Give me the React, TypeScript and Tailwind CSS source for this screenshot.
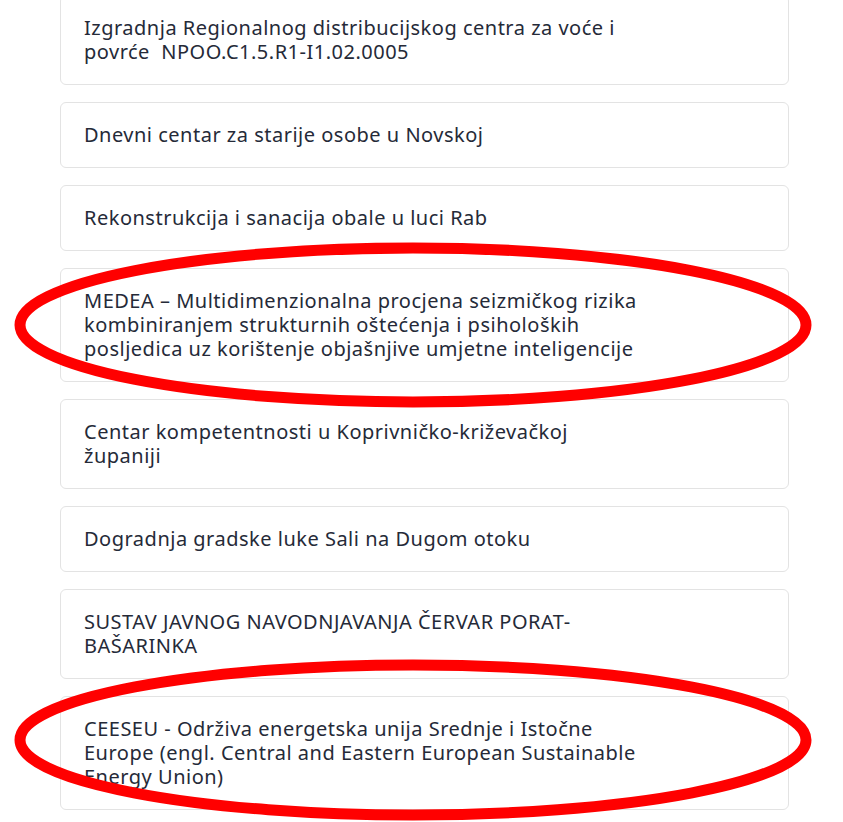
import React from 'react';

const projects: string[][] = [
  ['Izgradnja Regionalnog distribucijskog centra za voće i', 'povrće  NPOO.C1.5.R1-I1.02.0005'],
  ['Dnevni centar za starije osobe u Novskoj'],
  ['Rekonstrukcija i sanacija obale u luci Rab'],
  [
    'MEDEA – Multidimenzionalna procjena seizmičkog rizika',
    'kombiniranjem strukturnih oštećenja i psiholoških',
    'posljedica uz korištenje objašnjive umjetne inteligencije',
  ],
  ['Centar kompetentnosti u Koprivničko-križevačkoj', 'županiji'],
  ['Dogradnja gradske luke Sali na Dugom otoku'],
  ['SUSTAV JAVNOG NAVODNJAVANJA ČERVAR PORAT-', 'BAŠARINKA'],
  [
    'CEESEU - Održiva energetska unija Srednje i Istočne',
    'Europe (engl. Central and Eastern European Sustainable',
    'Energy Union)',
  ],
];

const App: React.FC = () => {
  return (
    <div className="relative w-[843px] h-[822px] overflow-hidden bg-white" style={{ fontFamily: '"Noto Sans", Arial, sans-serif' }}>
      {/* project list */}
      <div className="flex flex-col gap-[17px] pl-[60px] -mt-[5px]">
        {projects.map((lines, i) => (
          <div key={i} className="w-[729px] rounded-md border border-[#e3e3e3] bg-white px-[23px] py-[20px]">
            {lines.map((line, j) => (
              <div key={j} className="whitespace-pre text-[20px] leading-[24px] tracking-[0.5px] text-[#252a38]">
                {line}
              </div>
            ))}
          </div>
        ))}
      </div>

      {/* red annotation rings */}
      <svg className="absolute inset-0 pointer-events-none" width="843" height="822" viewBox="0 0 843 822">
        <ellipse cx="413" cy="325" rx="393" ry="77" fill="none" stroke="#ff0000" strokeWidth="11" />
        <ellipse cx="413" cy="740" rx="393" ry="75" fill="none" stroke="#ff0000" strokeWidth="11" />
      </svg>
    </div>
  );
};

export default App;
